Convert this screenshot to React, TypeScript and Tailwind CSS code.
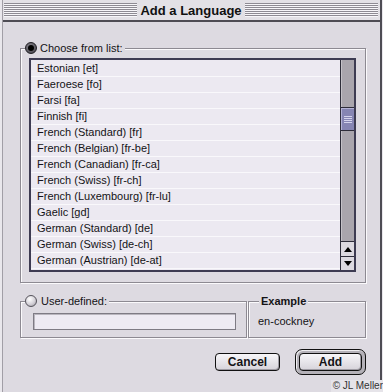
import React from "react";

const items = [
  "Estonian [et]",
  "Faeroese [fo]",
  "Farsi [fa]",
  "Finnish [fi]",
  "French (Standard) [fr]",
  "French (Belgian) [fr-be]",
  "French (Canadian) [fr-ca]",
  "French (Swiss) [fr-ch]",
  "French (Luxembourg) [fr-lu]",
  "Gaelic [gd]",
  "German (Standard) [de]",
  "German (Swiss) [de-ch]",
  "German (Austrian) [de-at]",
];

function Stripes() {
  return (
    <div className="h-[14px] flex-1 bg-[repeating-linear-gradient(to_bottom,#8e8b93_0px,#8e8b93_1px,#f7f6f9_1px,#f7f6f9_2px)]" />
  );
}

function RadioOn() {
  return (
    <div className="flex h-[12px] w-[12px] items-center justify-center rounded-full border border-[#1e1d22] bg-[radial-gradient(circle_at_40%_35%,#8a8890,#3e3c44)]">
      <div className="h-[6px] w-[6px] rounded-full bg-black" />
    </div>
  );
}

function RadioOff() {
  return (
    <div className="h-[12px] w-[12px] rounded-full border border-[#55535b] bg-[radial-gradient(circle_at_38%_32%,#ffffff,#d4d1d8_55%,#97949c)]" />
  );
}

export default function App() {
  return (
    <div className="relative flex h-[392px] w-[383px] overflow-hidden bg-[#e9e7ec] font-['Liberation_Sans',Arial,sans-serif] text-[#141316]">
      <div className="w-[2px] shrink-0" />
      <div className="flex w-[380px] shrink-0 flex-col border-l border-r-2 border-l-[#a19ea6] border-r-[#4e4c54] bg-[#dddae1]">
        {/* title bar */}
        <div className="flex h-[20px] items-center bg-[#e3e1e6] pl-[1px] pr-[2px]">
          <Stripes />
          <div className="px-[3px] text-[13px] font-bold leading-none text-[#111]">Add a Language</div>
          <Stripes />
        </div>
        <div className="h-[2px] bg-[#4e4c54]" />

        {/* body */}
        <div className="flex flex-col pl-[17px] pr-[14px]">
          {/* group 1 */}
          <div className="relative mt-[26px] h-[235px] border border-[#8d8a92] shadow-[inset_1px_1px_0_#fbfafc,1px_1px_0_#fbfafc]">
            <div className="absolute left-[4px] top-[-7px] flex items-center gap-[3px] bg-[#dddae1] pr-[2px]">
              <RadioOn />
              <span className="text-[11px] leading-[12px]">Choose from list:</span>
            </div>
            <div className="ml-[8px] mt-[9px] flex h-[214px] w-[327px] border-2 border-[#3d3b52]">
              <div className="flex flex-1 flex-col bg-[#ece9f1] pt-[1px]">
                {items.map((t) => (
                  <div
                    key={t}
                    className="flex h-[16px] items-center border-b border-[#f9f8fb] pl-[6px] text-[11px] leading-none"
                  >
                    {t}
                  </div>
                ))}
              </div>
              {/* scrollbar */}
              <div className="flex w-[14px] flex-col border-l border-[#2e2d3a]">
                <div className="flex flex-1 flex-col bg-[#a9a5ad] shadow-[inset_1px_0_0_#c4c1c8]">
                  <div className="h-[47px]" />
                  <div className="flex h-[24px] flex-col items-center justify-center gap-[1px] border-y border-[#2e2d3a] bg-[#8685b3] shadow-[inset_1px_1px_0_#b4b3d6]">
                    <div className="h-[1px] w-[8px] bg-[#d4d3ec]" />
                    <div className="h-[1px] w-[8px] bg-[#d4d3ec]" />
                    <div className="h-[1px] w-[8px] bg-[#d4d3ec]" />
                    <div className="h-[1px] w-[8px] bg-[#d4d3ec]" />
                  </div>
                </div>
                <div className="flex h-[15px] items-center justify-center border-t border-[#2e2d3a] bg-[#dcd9e0]">
                  <svg width="8" height="5" viewBox="0 0 8 5">
                    <path d="M4 0 L8 5 L0 5 Z" fill="#000" />
                  </svg>
                </div>
                <div className="flex h-[14px] items-center justify-center border-t border-[#2e2d3a] bg-[#dcd9e0]">
                  <svg width="8" height="5" viewBox="0 0 8 5">
                    <path d="M0 0 L8 0 L4 5 Z" fill="#000" />
                  </svg>
                </div>
              </div>
            </div>
          </div>

          {/* lower groups */}
          <div className="mt-[18px] flex">
            <div className="relative h-[37px] w-[227px] border border-[#8d8a92] shadow-[inset_1px_1px_0_#fbfafc,1px_1px_0_#fbfafc]">
              <div className="absolute left-[4px] top-[-7px] flex items-center gap-[4px] bg-[#dddae1] pr-[2px]">
                <RadioOff />
                <span className="text-[11px] leading-[12px]">User-defined:</span>
              </div>
              <div className="ml-[12px] mt-[11px] h-[17px] w-[203px] border border-[#7e7b84] bg-[#eeebf3] shadow-[inset_1px_1px_0_#b9b6be]" />
            </div>
            <div className="relative ml-[1px] h-[37px] w-[118px] border border-[#8d8a92] shadow-[inset_1px_1px_0_#fbfafc,1px_1px_0_#fbfafc]">
              <div className="absolute left-[10px] top-[-7px] bg-[#dddae1] px-[2px] text-[11px] font-bold leading-[12px]">
                Example
              </div>
              <div className="pl-[9px] pt-[13px] text-[11px] leading-[12px]">en-cockney</div>
            </div>
          </div>

          {/* buttons */}
          <div className="mt-[11px] flex items-center justify-end gap-[15px]">
            <div className="flex h-[18px] w-[65px] items-center justify-center rounded-[4px] border border-[#111] bg-[linear-gradient(to_bottom,#f7f6f9,#d6d3da)] text-[12px] font-bold leading-none shadow-[inset_-1px_-1px_0_#9e9ba3]">
              Cancel
            </div>
            <div className="flex h-[26px] w-[71px] items-center justify-center rounded-[7px] border border-[#111] bg-[#b4b1b8] shadow-[inset_1px_1px_0_#eeedf0]">
              <div className="flex h-[18px] w-[63px] items-center justify-center rounded-[4px] border border-[#111] bg-[linear-gradient(to_bottom,#f7f6f9,#d6d3da)] text-[12px] font-bold leading-none shadow-[inset_-1px_-1px_0_#9e9ba3]">
                Add
              </div>
            </div>
          </div>
        </div>
      </div>
      <div className="absolute bottom-0 right-0 bg-[#e6e4e9] pl-[2px] text-[10px] leading-[12px] text-[#333]">
        © JL Meller
      </div>
    </div>
  );
}
